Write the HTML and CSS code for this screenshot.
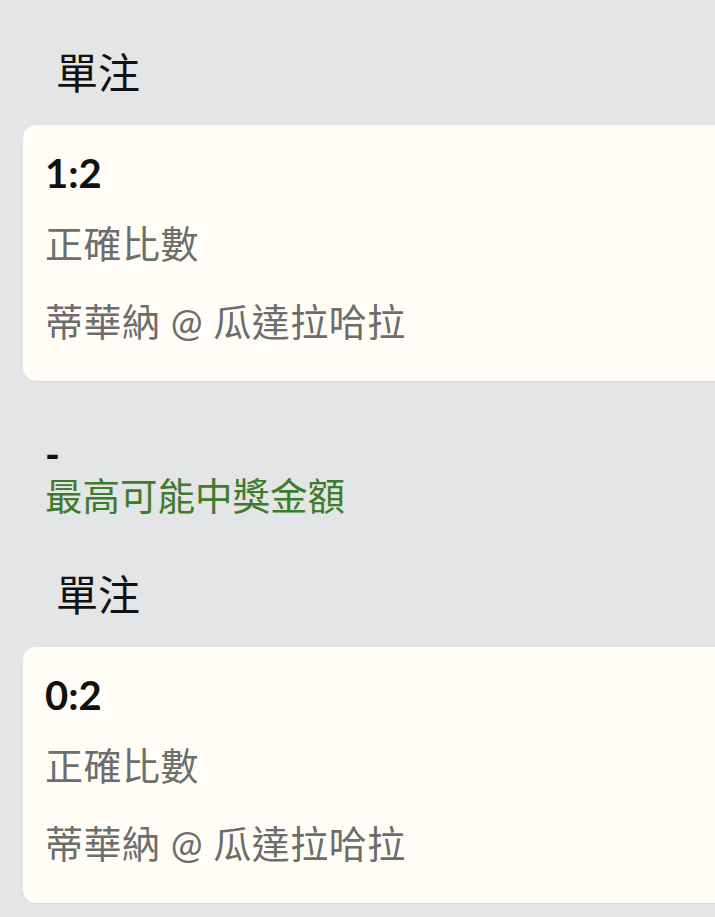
FILE: index.html
```html
<!DOCTYPE html>
<html>

<head>
  <meta charset="utf-8">
  <title>單注</title>
  <link rel="stylesheet" href="styles.css">
</head>

<body>
  <div class="slip">
    <div class="bet">
      <h3 class="bet-type">單注</h3>
      <div class="bet-card">
        <div class="bet-score">1:2</div>
        <div class="bet-market">正確比數</div>
        <div class="bet-match">蒂華納 @ 瓜達拉哈拉</div>
      </div>
      <div class="bet-return">
        <div class="return-value">-</div>
        <div class="return-label">最高可能中獎金額</div>
      </div>
    </div>

    <div class="bet">
      <h3 class="bet-type">單注</h3>
      <div class="bet-card">
        <div class="bet-score">0:2</div>
        <div class="bet-market">正確比數</div>
        <div class="bet-match">蒂華納 @ 瓜達拉哈拉</div>
      </div>
      <div class="bet-return">
        <div class="return-value">-</div>
        <div class="return-label">最高可能中獎金額</div>
      </div>
    </div>
  </div>
</body>

</html>
```

FILE: styles.css
```css
/* Reset default margin and padding for body */
body {
  margin: 0;
  padding: 0;
  background-color: #e4e5e7;
  font-family: 'Lato', 'Noto Sans CJK TC', sans-serif;
  overflow: hidden;
}

/* Wrapper for the bet slip */
.slip {
  padding: 45px 0 0 23px;
}

/* One bet block */
.bet {
  padding-bottom: 49px;
}

/* Bet type title */
.bet-type {
  margin: 0 0 24px 33px;
  font-size: 42px;
  line-height: 56px;
  font-weight: normal;
  color: #111;
}

/* Selection card */
.bet-card {
  margin-right: -40px;
  padding: 24px 24px 34px 22px;
  background-color: #fffdf6;
  border-radius: 13px;
  box-shadow: 0 1px 1px rgba(0, 0, 0, 0.05);
}

.bet-score {
  font-size: 40px;
  line-height: 48px;
  font-weight: bold;
  color: #111;
}

.bet-market,
.bet-match {
  font-size: 38px;
  line-height: 52px;
  letter-spacing: 0.5px;
  color: #6d6d6b;
}

.bet-market {
  margin-top: 20px;
}

.bet-match {
  margin-top: 26px;
}

/* Possible return */
.bet-return {
  padding: 53px 0 0 22px;
}

.return-value {
  font-size: 40px;
  line-height: 40px;
  font-weight: bold;
  color: #111;
}

.return-label {
  font-size: 37.5px;
  line-height: 44px;
  color: #3f7b2c;
}
```
